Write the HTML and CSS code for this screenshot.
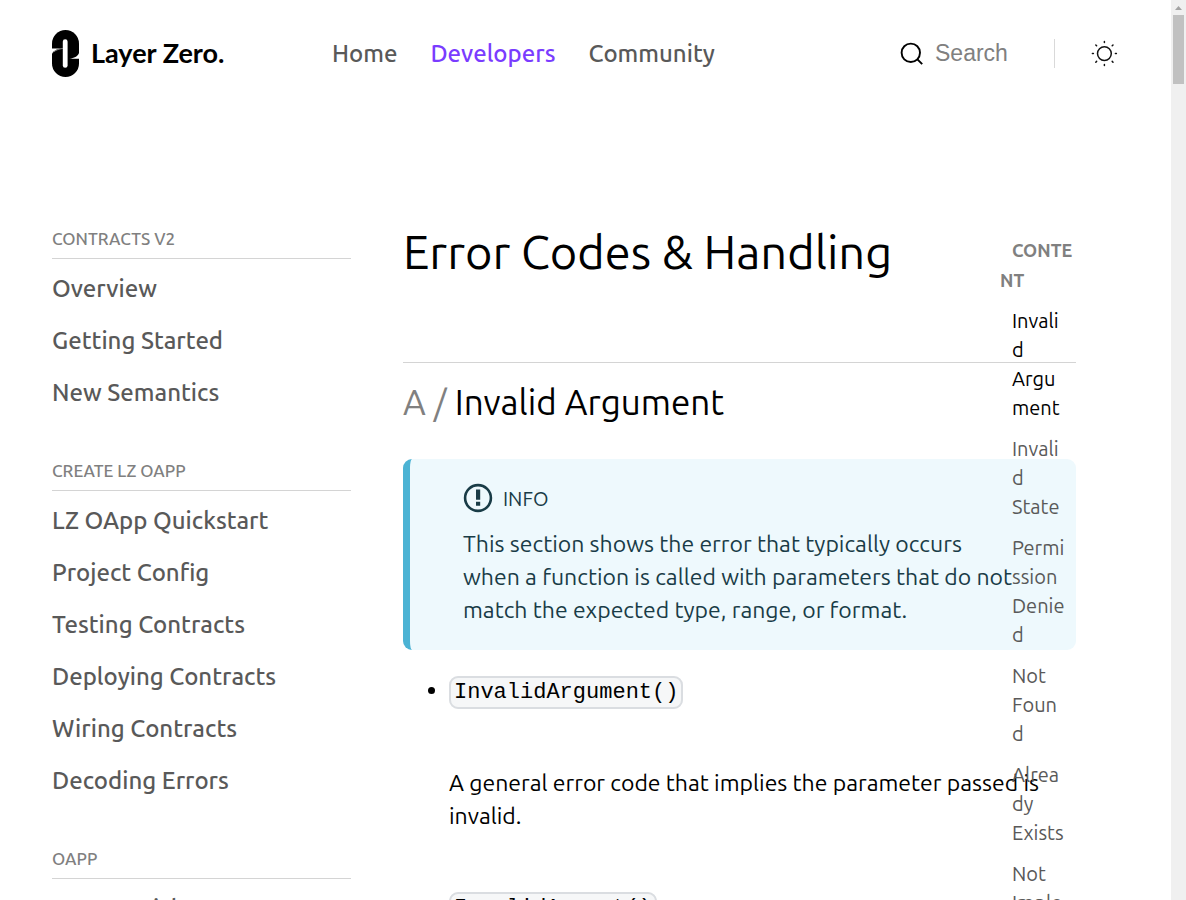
FILE: index.html
```html
<!DOCTYPE html>
<html lang="en">
<head>
<meta charset="utf-8">
<title>Error Codes &amp; Handling | LayerZero</title>
<link rel="stylesheet" href="styles.css">
</head>
<body>
<div class="page">
  <header class="header">
    <a class="brand" href="#">
      <svg class="brand-mark" viewBox="0 0 27 47" aria-hidden="true">
        <rect width="27" height="47" rx="13.5"/>
        <path fill="#fff" d="M0 18.4H9C5 18.9 1.2 20.5 0 24Z M27 28.8H17.5C22 28 25.8 26.5 27 23Z"/>
        <path d="M10.8 18.4C7 19 4 20 1.6 22" fill="none" stroke="#fff" stroke-width=".5"/>
        <rect x="10.8" y="9.3" width="4.8" height="28.5" rx="2.4" fill="#fff"/>
      </svg>
      <span class="brand-name">Layer Zero.</span>
    </a>
    <nav class="nav">
      <a href="#">Home</a>
      <a class="current" href="#">Developers</a>
      <a href="#">Community</a>
    </nav>
    <div class="tools">
      <label class="search">
        <svg viewBox="0 0 24 24" width="24" height="24" fill="none" stroke="#000" stroke-width="1.9" aria-hidden="true"><circle cx="10.8" cy="10.8" r="9.2"/><path d="M17.2 17.2L22.2 22.2"/></svg>
        <input type="search" placeholder="Search" aria-label="Search">
      </label>
      <button class="theme" type="button" aria-label="Switch theme">
        <svg viewBox="0 0 28 28" width="28" height="28" fill="none" stroke="#111" stroke-width="1.5" stroke-linecap="round" aria-hidden="true"><circle cx="14.4" cy="13.6" r="6.9"/><path d="M14.4 1.6v1M14.4 24.6v1M2.4 13.6h1M25.4 13.6h1M5.8 5l.8.8M22.2 21.4l.8.8M5.8 22.2l.8-.8M22.2 5.8l.8-.8"/></svg>
      </button>
    </div>
  </header>
  <div class="layout">
    <aside class="sidebar">
      <section>
        <h2>CONTRACTS V2</h2>
        <ul>
          <li><a href="#">Overview</a></li>
          <li><a href="#">Getting Started</a></li>
          <li><a href="#">New Semantics</a></li>
        </ul>
      </section>
      <section>
        <h2>CREATE LZ OAPP</h2>
        <ul>
          <li><a href="#">LZ OApp Quickstart</a></li>
          <li><a href="#">Project Config</a></li>
          <li><a href="#">Testing Contracts</a></li>
          <li><a href="#">Deploying Contracts</a></li>
          <li><a href="#">Wiring Contracts</a></li>
          <li><a href="#">Decoding Errors</a></li>
        </ul>
      </section>
      <section>
        <h2>OAPP</h2>
        <ul>
          <li><a href="#">OApp Quickstart</a></li>
        </ul>
      </section>
    </aside>
    <main class="article">
      <h1>Error Codes &amp; Handling</h1>
      <h2><span class="index">A /</span> Invalid Argument</h2>
      <div class="note">
        <div class="note-title">
          <svg viewBox="0 0 30 30" width="30" height="30" aria-hidden="true"><circle cx="15" cy="15" r="12.9" fill="none" stroke="#193c47" stroke-width="2.6"/><path fill="#193c47" d="M13 6.6h4.2v10.2h-4.2zM13 18.8h4.2v4h-4.2z"/></svg>
          <span>INFO</span>
        </div>
        <p>This section shows the error that typically occurs when a function is called with parameters that do not match the expected type, range, or format.</p>
      </div>
      <ul class="errors">
        <li><code>InvalidArgument()</code><p>A general error code that implies the parameter passed is invalid.</p></li>
        <li><code>InvalidAmount()</code></li>
      </ul>
    </main>
    <nav class="contents" aria-label="Content">
      <h2>CONTE<wbr>NT</h2>
      <ul>
        <li><a class="current" href="#">Invali<wbr>d Argu<wbr>ment</a></li>
        <li><a href="#">Invali<wbr>d State</a></li>
        <li><a href="#">Permi<wbr>ssion Denie<wbr>d</a></li>
        <li><a href="#">Not Foun<wbr>d</a></li>
        <li><a href="#">Alrea<wbr>dy Exists</a></li>
        <li><a href="#">Not Imple<wbr>mente<wbr>d</a></li>
      </ul>
    </nav>
  </div>
</div>
<div class="scrollbar" aria-hidden="true"><span class="arrow"></span><span class="thumb"></span></div>
</body>
</html>
```
FILE: styles.css
```css
* { box-sizing: border-box; }
body { margin: 0; height: 100vh; overflow: hidden; background: #fff; color: #000; font-family: Ubuntu, "Noto Sans", sans-serif; }
a { color: inherit; text-decoration: none; }
ul { list-style: none; margin: 0; padding: 0; }
h1, h2, p { margin: 0; font-weight: 400; }
.page { height: 100%; overflow: hidden; padding: 0 68px 0 52px; }

.header { display: flex; align-items: center; height: 107px; }
.brand { display: flex; align-items: center; gap: 12px; width: 280px; }
.brand-mark { width: 27px; height: 47px; }
.brand-name { padding-bottom: 2px; font: 700 27px/32px Lato, sans-serif; }
.nav { display: flex; gap: 33px; font-size: 24px; font-weight: 500; color: #595959; }
.nav .current { color: #7a3cff; }
.tools { display: flex; align-items: center; margin-left: auto; }
.search { display: flex; align-items: center; gap: 11px; width: 155px; height: 29px; border-right: 1px solid #d9d9d9; }
.search svg { flex: none; }
.search input { width: 100px; min-width: 0; padding: 0 0 2px; border: 0; outline: 0; background: none; font: 23px/28px "Liberation Sans", Arial, sans-serif; }
.search input::placeholder { color: #808080; opacity: 1; }
.theme { display: flex; margin-left: 35px; padding: 0; border: 0; background: none; }

.layout { display: grid; grid-template-columns: 299px minmax(0, 1fr) 76px; padding: 117px 42px 0 0; }
.sidebar { display: flex; flex-direction: column; gap: 37px; font-weight: 500; }
.sidebar h2 { padding-bottom: 4px; border-bottom: 1px solid #d4d4d4; color: #808080; font-size: 17px; font-weight: 500; line-height: 30px; }
.sidebar ul { padding-top: 4px; }
.sidebar li { color: #595959; font-size: 24px; line-height: 52px; }

.article { grid-area: 1 / 2 / 2 / 4; margin-left: 52px; }
.article h1 { padding-bottom: 82px; border-bottom: 1px solid #d4d4d4; font-size: 47px; line-height: 56px; }
.article h2 { padding: 16px 0 34px; font-size: 35px; line-height: 46px; }
.index { color: #808080; }
.note { padding: 24px 57px 24px 53px; border-left: 7px solid #4cb3d4; border-radius: 9px; background: #eef9fd; color: #193c47; font-size: 23px; line-height: 33px; }
.note-title { display: flex; align-items: center; gap: 10px; height: 30px; margin-bottom: 14px; font-size: 20px; }
.errors { padding: 23px 0 0 46px; list-style: disc; font-size: 23px; line-height: 33px; }
.errors li { margin-bottom: 57px; }
.errors code { padding: 2px 3px; border: 2px solid #dadde1; border-radius: 9px; background: #f6f7f8; font: 22px/32px "Liberation Mono", monospace; }
.errors p { padding-top: 57px; }

.contents { grid-area: 1 / 3 / 2 / 4; padding-top: 11px; }
.contents h2 { color: #808080; font-size: 18px; font-weight: 700; line-height: 30px; text-indent: 12px; }
.contents ul { display: flex; flex-direction: column; gap: 12px; width: 67px; padding: 11px 0 0 12px; color: #595959; font-size: 20px; line-height: 29px; }
.contents .current { color: #000; }

.scrollbar { position: fixed; top: 0; right: 0; bottom: 0; width: 15px; padding: 0 2px; background: #f0f0f0; }
.arrow { display: block; width: 7px; height: 4px; margin: 6px auto 5px; background: #a3a3a3; clip-path: polygon(50% 0, 100% 100%, 0 100%); }
.thumb { display: block; height: 69px; background: #c1c1c1; }
```
